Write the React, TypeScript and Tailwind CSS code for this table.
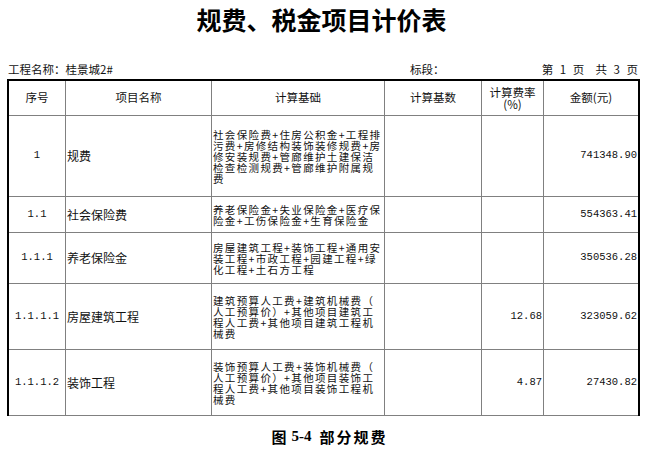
import React from "react";

const cjk = "font-['Noto_Sans_CJK_SC',sans-serif]";
const mono = "font-['Liberation_Mono',monospace]";

type Row = {
  no: string;
  name: string;
  calc: string[];
  rate: string;
  amt: string;
  h: string;
};

const rows: Row[] = [
  {
    no: "1",
    name: "规费",
    calc: [
      "社会保险费+住房公积金+工程排",
      "污费+房修结构装饰装修规费+房",
      "修安装规费+管廊维护土建保洁",
      "检查检测规费+管廊维护附属规",
      "费",
    ],
    rate: "",
    amt: "741348.90",
    h: "h-[81px]",
  },
  {
    no: "1.1",
    name: "社会保险费",
    calc: ["养老保险金+失业保险金+医疗保", "险金+工伤保险金+生育保险金"],
    rate: "",
    amt: "554363.41",
    h: "h-[36px]",
  },
  {
    no: "1.1.1",
    name: "养老保险金",
    calc: [
      "房屋建筑工程+装饰工程+通用安",
      "装工程+市政工程+园建工程+绿",
      "化工程+土石方工程",
    ],
    rate: "",
    amt: "350536.28",
    h: "h-[51px]",
  },
  {
    no: "1.1.1.1",
    name: "房屋建筑工程",
    calc: [
      "建筑预算人工费+建筑机械费（",
      "人工预算价）+其他项目建筑工",
      "程人工费+其他项目建筑工程机",
      "械费",
    ],
    rate: "12.68",
    amt: "323059.62",
    h: "h-[66px]",
  },
  {
    no: "1.1.1.2",
    name: "装饰工程",
    calc: [
      "装饰预算人工费+装饰机械费（",
      "人工预算价）+其他项目装饰工",
      "程人工费+其他项目装饰工程机",
      "械费",
    ],
    rate: "4.87",
    amt: "27430.82",
    h: "h-[66px]",
  },
];

export default function App() {
  return (
    <div className={`w-[659px] h-[453px] bg-white text-[#111] ${cjk} overflow-hidden`}>
      <div className="ml-[7px] w-[633px]">
        <div className="h-[38px] flex items-center justify-center">
          <span className="text-[25px] font-bold leading-none text-black pr-[4px]">
            规费、税金项目计价表
          </span>
        </div>
        <div className="mt-[23px] h-[18px] flex items-center text-[11.5px] leading-none relative">
          <span className="pl-[1px]">工程名称：桂景城2#</span>
          <span className="absolute left-[403px]">标段：</span>
          <span className="absolute right-[0px] tracking-[2px] whitespace-pre">第 1 页  共 3 页</span>
        </div>
        <div className="border-l-2 border-r-2 border-t-2 border-black">
          {/* header */}
          <div className="flex h-[35px] border-b border-[#808080] text-[11.5px]">
            <div className="w-[57px] shrink-0 border-r border-[#808080] flex items-center justify-center">序号</div>
            <div className="w-[146px] shrink-0 border-r border-[#808080] flex items-center justify-center">项目名称</div>
            <div className="w-[173px] shrink-0 border-r border-[#808080] flex items-center justify-center">计算基础</div>
            <div className="w-[97px] shrink-0 border-r border-[#808080] flex items-center justify-center">计算基数</div>
            <div className="w-[62px] shrink-0 border-r border-[#808080] flex flex-col items-center justify-center">
              <span className="block h-[12px] leading-[12px]">计算费率</span>
              <span className="block h-[12px] leading-[12px]">(%)</span>
            </div>
            <div className="flex-1 flex items-center justify-center">金额(元)</div>
          </div>
          {rows.map((r) => (
            <div key={r.no} className={`flex ${r.h} border-b border-[#808080]`}>
              <div className={`w-[57px] shrink-0 border-r border-[#808080] flex items-center justify-center ${mono} text-[10.5px]`}>
                {r.no}
              </div>
              <div className="w-[146px] shrink-0 border-r border-[#808080] flex items-center pl-[1px] text-[12px]">
                {r.name}
              </div>
              <div className="w-[173px] shrink-0 border-r border-[#808080] flex flex-col justify-center pl-[1px] text-[10.5px] tracking-[1.35px] whitespace-nowrap">
                {r.calc.map((l, i) => (
                  <span key={i} className="block h-[11px] leading-[11px]">
                    {l}
                  </span>
                ))}
              </div>
              <div className="w-[97px] shrink-0 border-r border-[#808080]" />
              <div className={`w-[62px] shrink-0 border-r border-[#808080] flex items-center justify-end pr-[1px] ${mono} text-[10.5px]`}>
                {r.rate}
              </div>
              <div className={`flex-1 flex items-center justify-end pr-[1px] ${mono} text-[10.5px]`}>
                {r.amt}
              </div>
            </div>
          ))}
        </div>
      </div>
      <div className="mt-[11px] h-[18px] flex items-center justify-center text-[15px] font-bold leading-none text-black">
        <span>图</span>
        <span className="font-['Liberation_Serif',serif] ml-[5px] mr-[8px]">5-4</span>
        <span className="tracking-[2px]">部分规费</span>
      </div>
    </div>
  );
}
